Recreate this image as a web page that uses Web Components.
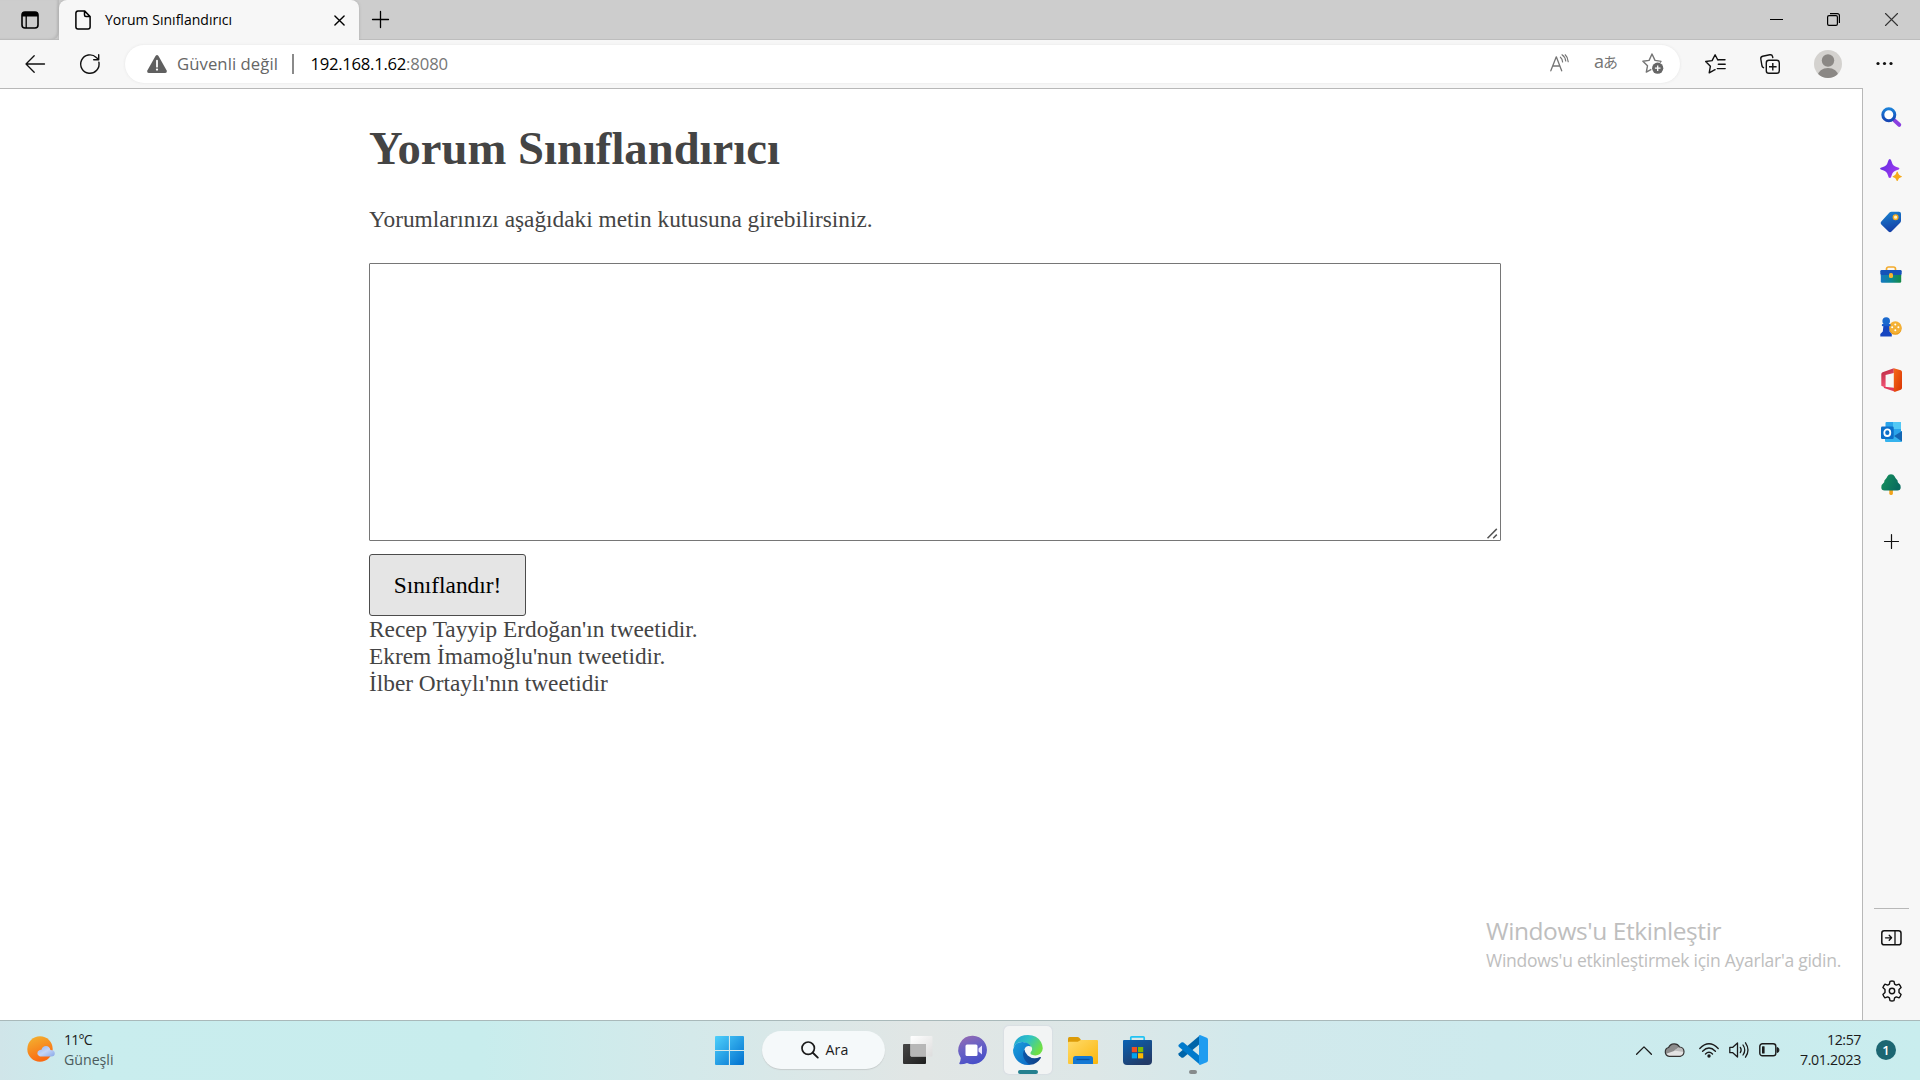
<!DOCTYPE html>
<html lang="tr">
<head>
<meta charset="utf-8">
<title>Yorum Sınıflandırıcı</title>
<style>
html,body{margin:0;height:100%;overflow:hidden;background:#fff}
body{font-family:"Open Sans","Noto Sans",sans-serif;color:#1b1b1b}
</style>
</head>
<body>
<desktop-screen></desktop-screen>
<script>
const stroke = (d, w = 1.4, c = 'currentColor') => `<path d="${d}" fill="none" stroke="${c}" stroke-width="${w}" stroke-linecap="round" stroke-linejoin="round"/>`;
const ICONS = {
  tabs: [18, 18, `<rect x="1" y="1" width="16" height="16" rx="3" fill="none" stroke="currentColor" stroke-width="1.6"/><path d="M1 5.5V4a3 3 0 0 1 3-3h10a3 3 0 0 1 3 3v1.5z" fill="currentColor"/><path d="M5.2 5v12" stroke="currentColor" stroke-width="1.3"/>`],
  file: [16, 20, stroke('M9.5.9H3A2.2 2.2 0 0 0 .9 3v14A2.2 2.2 0 0 0 3 19.1h10a2.2 2.2 0 0 0 2.1-2.1V6.5zM9.5.9V5A1.5 1.5 0 0 0 11 6.5h4.1', 1.5)],
  close: [11, 11, stroke('M.9.9l9.2 9.2M10.1.9L.9 10.1', 1.4)],
  plus: [17, 17, stroke('M8.5.5v16M.5 8.5h16', 1.3)],
  plusBig: [15, 15, stroke('M7.5.5v14M.5 7.5h14', 1.2)],
  min: [13, 13, `<path d="M0 6.5h13" stroke="#000" stroke-width="1"/>`],
  restore: [13, 13, `<rect x=".6" y="2.6" width="9.8" height="9.8" rx="1.4" fill="none" stroke="#000" stroke-width="1.2"/><path d="M3 .6h7.4a2 2 0 0 1 2 2v7.4" fill="none" stroke="#000" stroke-width="1.2"/>`],
  winclose: [13, 13, stroke('M.5.5l12 12M12.5.5l-12 12', 1.1, '#333')],
  back: [20, 18, stroke('M19.5 9H1M9.2.8L1 9l8.2 8.2', 1.3)],
  refresh: [20, 20, stroke('M18.9 8.2A9.2 9.2 0 1 1 16.3 3.5l2.3 2.1M18.7.8v4.9h-5', 1.4)],
  warn: [20, 18, `<path d="M8.5 1Q10-1 11.5 1l8 14.2q1 2.5-1.4 2.8H1.9q-2.4-.3-1.4-2.8z" fill="#5f5f5f"/><path d="M10 5.7v6" stroke="#fff" stroke-width="1.8" stroke-linecap="round"/><circle cx="10" cy="14.6" r="1.15" fill="#fff"/>`],
  read: [19, 18, `<g color="#757575">${stroke('M.8 16.8L6.3 2.8l5.4 14M2.8 12h7', 1.3)}${stroke('M10.4 3.2q2 1.7 2.2 4.8M12 .8q3.4 2.3 3.7 6.2M15.2.8q2.6 2.3 3 6.9', 1.2)}</g>`],
  starPlus: [22, 21, `<path d="M17.8 8.1L13 7.4 10 1 7.1 7.4.9 8.3l4.6 4.5-1.2 6.3 5-2.8M17.8 8.1l1.2.3-1 1.2" fill="none" stroke="#757575" stroke-width="1.4" stroke-linejoin="round"/><circle cx="15.7" cy="15.2" r="5.6" fill="#666"/><path d="M15.7 12.4V18M12.9 15.2h5.6" stroke="#fff" stroke-width="1.3"/>`],
  favs: [21, 20, stroke('M20 5.8h-6.2L12.8 6l-2.7-5.2-3 5.8-6.4.9 4.7 4.7-1.2 6.6 4.9-2.6 1-.5M13.3 10.2h6.9M12.3 14.6h7.9', 1.4)],
  collect: [20, 20, stroke('M3.5 13.7A2.5 2.5 0 0 1 2 12L.8 5A2.4 2.4 0 0 1 2.6 2.3L9.8.8a2.4 2.4 0 0 1 2.8 1.8l.2 1', 1.4) + `<rect x="6.3" y="6.3" width="13" height="13" rx="2.6" fill="none" stroke="currentColor" stroke-width="1.4"/><path d="M12.8 9v7.6M9 12.8h7.6" stroke="currentColor" stroke-width="1.4"/>`],
  avatar: [28, 28, `<defs><clipPath id="c"><circle cx="14" cy="14" r="14"/></clipPath></defs><g clip-path="url(#c)"><rect width="28" height="28" fill="#d4d2cf"/><circle cx="14" cy="10.5" r="6.2" fill="#8b8885"/><ellipse cx="14" cy="26" rx="10.2" ry="8" fill="#8b8885"/></g>`],
  dots: [17, 5, `<circle cx="2" cy="2.5" r="1.6"/><circle cx="8.5" cy="2.5" r="1.6"/><circle cx="15" cy="2.5" r="1.6"/>`],
  sSearch: [20, 20, `<path d="M13.4 13.4l4.8 4.4" stroke="#8a3fe0" stroke-width="4" stroke-linecap="round"/><circle cx="7.8" cy="7.8" r="6" fill="#fff" stroke="url(#a)" stroke-width="3"/><defs><linearGradient id="a" x2="0" y2="1"><stop stop-color="#1b7fd8"/><stop offset="1" stop-color="#1646b4"/></linearGradient></defs>`],
  sSpark: [22, 22, `<defs><linearGradient id="a" x2="1" y2=".6"><stop stop-color="#5a2be0"/><stop offset="1" stop-color="#a13af0"/></linearGradient></defs><path d="M9.8 0q1.3 0 1.8 2.5 1.2 4.7 5 5.4 2.9.7 2.9 1.7t-2.9 1.7q-3.8.8-5 5.2-.5 2.6-1.8 2.6T8 16.500q-1.200-4.400-5-5.200Q0 10.600 0 9.600t3-1.700q3.800-.7 5-5.400Q8.500 0 9.800 0z" fill="url(#a)"/><path d="M17.200 12.500q.7 0 1 1.800.6 2 2.300 2.400 1.500.3 1.500.9t-1.500.9q-1.700.4-2.300 2.300-.3 1.200-1 1.200t-1-1.200q-.6-1.900-2.300-2.300-1.400-.3-1.400-.9t1.400-.9q1.700-.4 2.300-2.400.3-1.800 1-1.800z" fill="#f5aa1c"/>`],
  sTag: [22, 22, `<defs><linearGradient id="a" y2="1" x2=".3"><stop stop-color="#1a86d0"/><stop offset="1" stop-color="#1440a8"/></linearGradient></defs><path d="M9.500 1.500Q10.200.8 11.500.8H19q2 0 2 2v7q0 1.200-.8 2l-8.700 8.800q-1.500 1.300-3 0L1.300 13.500q-1.500-1.500 0-3z" fill="url(#a)"/><circle cx="15.600" cy="6.200" r="2.300" fill="#fff1c0" stroke="#f4aa1e" stroke-width="1.400"/>`],
  sBox: [22, 17, `<defs><linearGradient id="a" x2="1"><stop stop-color="#1678c4"/><stop offset=".5" stop-color="#0c8795"/><stop offset="1" stop-color="#158a45"/></linearGradient></defs><path d="M6.500 4.500V3a2 2 0 0 1 2-2h5a2 2 0 0 1 2 2v1.500" fill="none" stroke="#f3ab2c" stroke-width="1.700"/><rect x=".8" y="8" width="20.400" height="8.700" rx="1.300" fill="url(#a)"/><rect x=".3" y="4" width="21.400" height="5" rx="1.200" fill="#1552b8"/><rect x="9" y="7" width="4" height="5" rx="1.600" fill="#f7b52e"/>`],
  sGames: [22, 20, `<circle cx="15.300" cy="11.500" r="6.300" fill="#e99710"/><circle cx="15.300" cy="10.500" r="6.200" fill="#f4b135"/><g fill="#fff"><circle cx="15.300" cy="7.400" r="1"/><circle cx="12.200" cy="10.300" r="1"/><circle cx="18.400" cy="10.300" r="1"/><circle cx="15.300" cy="13.300" r="1"/></g><path d="M3.500 8h5.500l.5 6.500 2.300 2.500v2.500H.3V17l2.500-2.500z" fill="#1646c0"/><rect x="1.800" y="7" width="8.800" height="2.300" rx="1" fill="#1a5ccc"/><circle cx="6.200" cy="4" r="3.800" fill="#1b69ce"/>`],
  sOffice: [21, 24, `<defs><linearGradient id="a" y2="1" x2=".4"><stop stop-color="#b5263e"/><stop offset="1" stop-color="#f7577a"/></linearGradient><linearGradient id="b" y2="1"><stop stop-color="#f66a1a"/><stop offset="1" stop-color="#d93403"/></linearGradient></defs><path d="M12.800.2L1.600 4.300Q.3 4.900.3 6.300v11.400l4.300 2V7l8.200-2z" fill="url(#a)"/><path d="M3.500 18.700l9.300 1 1.500 4.100L3 20q-1-.5.500-1.300z" fill="#e2395b"/><path d="M12.800.2l7 2q1.200.5 1.200 1.800v16q0 1.300-1.200 1.700l-5.600 2.100-1.400-.2z" fill="url(#b)"/>`],
  sOutlook: [21, 20, `<rect x="4.500" y="0" width="15.500" height="15" rx="1" fill="#2aa4ea"/><path d="M12 0h8v7h-8z" fill="#52c8f5"/><path d="M4 9l8.500 5L21 9v10q0 1-1 1H5q-1 0-1-1z" fill="#35b3ee"/><path d="M13 14l8-5v10.500z" fill="#1466b3"/><rect x="0" y="4.500" width="12.700" height="12.500" rx="1.200" fill="#0c6fc9"/><ellipse cx="6.300" cy="10.700" rx="3" ry="3.300" fill="none" stroke="#fff" stroke-width="1.800"/>`],
  sTree: [20, 21, `<defs><linearGradient id="a" x2="1" y2=".4"><stop stop-color="#17945c"/><stop offset="1" stop-color="#086c5e"/></linearGradient></defs><rect x="8.300" y="14" width="3.600" height="7" rx="1.400" fill="#f2a31b"/><path d="M10 .2q2.600 0 3.700 2.400.8 1.600 1.600 2.500 1.800 1.200 1.500 3.200 2.900 2.200 2.900 5 0 3.200-3.300 3.200H3.600q-3.300 0-3.300-3.200 0-2.800 2.900-5-.3-2 1.500-3.200.8-.9 1.600-2.500Q7.400.2 10 .2z" fill="url(#a)"/>`],
  sPanel: [21, 16, `<rect x=".8" y=".8" width="19.200" height="14" rx="2.400" fill="none" stroke="currentColor" stroke-width="1.500"/><path d="M14 1v14" stroke="currentColor" stroke-width="1.300"/>` + stroke('M4.500 7.800h6M8.200 5.300l2.400 2.500-2.400 2.500', 1.3)],
  gear: [22, 22, `<path d="M9 1.400Q11 .7 13 1.400l.6 2.700 1.700 1 2.800-.9q1.400 1.500 2 3.400L18 9.600v2.800l2.100 2q-.6 2-2 3.400l-2.800-.9-1.700 1-.6 2.700q-2 .7-4 0l-.6-2.700-1.700-1-2.800.9q-1.400-1.500-2-3.400l2.100-2V9.600l-2.100-2q.6-2 2-3.400l2.800.9 1.700-1z" fill="none" stroke="currentColor" stroke-width="1.400" stroke-linejoin="round"/><circle cx="11" cy="11" r="2.700" fill="none" stroke="currentColor" stroke-width="1.400"/>`],
  weather: [28, 26, `<defs><linearGradient id="a" y2="1" x2=".4"><stop stop-color="#f2b632"/><stop offset="1" stop-color="#fb6a12"/></linearGradient><linearGradient id="b" y2="1"><stop stop-color="#8fb2f2"/><stop offset=".5" stop-color="#c4d5f7"/><stop offset="1" stop-color="#88a7e8"/></linearGradient></defs><circle cx="13" cy="13" r="12.700" fill="url(#a)"/><path d="M13 20.500a3.400 3.400 0 0 1-.2-6.600q1.200-.3 1.700-.2Q15.500 10 19 10t4.400 3.900q4.400 0 4.400 3.400 0 3.200-3.600 3.200z" fill="url(#b)"/>`],
  start: [29, 29, `<defs><linearGradient id="a" gradientUnits="userSpaceOnUse" x2="29" y2="29"><stop stop-color="#4fd0fb"/><stop offset="1" stop-color="#0070cf"/></linearGradient></defs><path d="M1 0h12.900v13.900H0V1q0-1 1-1zM15 0h13q1 0 1 1v12.900H15zM0 15h13.900v14H1q-1 0-1-1zM15 15h14v13q0 1-1 1H15z" fill="url(#a)"/>`],
  find: [18, 18, `<circle cx="7.200" cy="7.200" r="6.200" fill="none" stroke="#1b1b1b" stroke-width="1.700"/><path d="M11.800 11.800l5 4.800" stroke="#1b1b1b" stroke-width="1.900" stroke-linecap="round"/>`],
  task: [30, 28, `<defs><linearGradient id="a" y2="1" x2="1"><stop stop-color="#474747"/><stop offset="1" stop-color="#1f1f1f"/></linearGradient><linearGradient id="b" y2="1" x2="1"><stop stop-color="#fff"/><stop offset="1" stop-color="#ddd"/></linearGradient></defs><rect y="8" width="23" height="20" rx="1" fill="url(#a)"/><rect x="7.500" y="0" width="22" height="20.500" rx="1" fill="url(#b)"/><path d="M7.500 8H23v12.500H8.500q-1 0-1-1z" fill="#b7b7b7"/>`],
  chat: [30, 30, `<defs><linearGradient id="a" y2="1" x2=".4"><stop stop-color="#9a6bb0"/><stop offset=".5" stop-color="#6a62c4"/><stop offset="1" stop-color="#4a50c8"/></linearGradient></defs><path d="M15 .8A14.200 14.200 0 1 1 9 28Q6 29.300 2 29.200q-1.200-.2-.6-1.200Q2.600 26 2.800 23A14.200 14.200 0 0 1 15 .8z" fill="url(#a)"/><rect x="7.500" y="9.500" width="12" height="11.500" rx="1.500" fill="#fff"/><path d="M20.500 13.500L24 10.500v9l-3.500-3z" fill="#e8e4ff"/>`],
  edge: [30, 30, `<defs><linearGradient id="a" x2="1" y2=".5"><stop stop-color="#1f9fd6"/><stop offset=".5" stop-color="#2fc3c4"/><stop offset="1" stop-color="#6fdf45"/></linearGradient><linearGradient id="b" y2="1"><stop stop-color="#19a0dc"/><stop offset="1" stop-color="#0d66c4"/></linearGradient><linearGradient id="c" x2="1"><stop stop-color="#0c56a8"/><stop offset="1" stop-color="#123f84"/></linearGradient></defs><path d="M.5 12Q2.500 0 15 0q9 0 13 7 4 8-1 12-3.500 2.300-8 .8-2.500-1-1-3 2.200-2.800.2-5.300-2.200-2.700-6.500-4Q5 5.500.5 12z" fill="url(#a)"/><path d="M0 15Q1.500 6.800 9.500 7q6 .3 8.700 4.500-5-1.700-6.700 2.700-1.300 5 2 10 2 3.500 4 5.600Q9 31 4 25.200 0 20.500 0 15z" fill="url(#b)"/><path d="M11.500 14.500q-2.600 3.700-.6 8.700 2 4.600 6.600 6.600 6.500-.8 10.200-6.600.8-1.700-.8-1.200-7 3-12.200-1.600-3.200-3-3.200-5.900z" fill="url(#c)"/>`],
  folder: [30, 27, `<defs><linearGradient id="a" y2="1" x2="1"><stop stop-color="#ffdb6b"/><stop offset="1" stop-color="#fbb60c"/></linearGradient></defs><path d="M0 1.500Q0 0 1.500 0h8q1 0 2 1l2 2.700V8H0z" fill="#dc9b08"/><path d="M0 5.800q0-1 1-1h8.800l3-1.800H29q1 0 1 1v22q0 1-1 1H1q-1 0-1-1z" fill="url(#a)"/><path d="M5 27v-5.500q0-2.500 2.500-2.500h15q2.500 0 2.500 2.500V27z" fill="#1478d4"/><path d="M8.500 22.500h13" stroke="#0a529f" stroke-width="1.300"/>`],
  store: [29, 29, `<defs><linearGradient id="a" y2="1" x2=".6"><stop stop-color="#0a63b4"/><stop offset="1" stop-color="#223b68"/></linearGradient></defs><path d="M7.800 5.500V1.700q0-.9.900-.9h11.600q.9 0 .9.900v3.800" fill="none" stroke="#22c3f3" stroke-width="1.700"/><path d="M1 4h27q1 0 1 1v20q0 4-4 4H4q-4 0-4-4V5q0-1 1-1z" fill="url(#a)"/><path d="M8.800 11h5.200v5.200H8.800z" fill="#f25022"/><path d="M15 11h5.200v5.200H15z" fill="#7fba00"/><path d="M8.800 17.200h5.200v5.200H8.800z" fill="#00a4ef"/><path d="M15 17.200h5.200v5.200H15z" fill="#ffb900"/>`],
  code: [30, 30, `<path d="M22 .2v8.600L5.500 22.400q-1.200.8-2.200 0L.8 20.200q-1-1 0-2z" fill="#0065a9"/><path d="M22 29.800v-8.600L5.500 7.600q-1.200-.8-2.200 0L.8 9.800q-1 1 0 2z" fill="#007acc"/><path d="M22 0l6.800 2.800Q30 3.400 30 4.700v20.600q0 1.300-1.200 1.900L22 30q-1.200-.3-1-2V2q-.2-1.700 1-2z" fill="#1f9cf0"/>`],
  chev: [16, 9, stroke('M.6 8.300L8 .9l7.400 7.400', 1.3)],
  cloud: [21, 14, `<path d="M5.200 13.300A4.500 4.500 0 0 1 4.600 4.500 6.200 6.200 0 0 1 15.600 4a4.700 4.700 0 0 1 .6 9.300z" fill="#e3e3e3"/><path d="M4.600 4.500A6.200 6.200 0 0 1 15.600 4L10 8 1.500 11Q0 6 4.600 4.500z" fill="#8c8c8c"/><path d="M10 7.500l5.600-3.500q4 .5 4.200 5z" fill="#bdbdbd"/><path d="M5.200 13.300A4.500 4.500 0 0 1 4.600 4.500 6.200 6.200 0 0 1 15.600 4a4.700 4.700 0 0 1 .6 9.300z" fill="none" stroke="#333" stroke-width="1.200"/>`],
  wifi: [20, 15, stroke('M.8 5.400Q10-3.800 19.200 5.400M3.600 8.200q6.400-6.200 12.800 0M6.500 11Q10 7.700 13.500 11', 1.4) + `<circle cx="10" cy="13" r="1.700"/>`],
  sound: [20, 16, stroke('M.8 5.300h3L8.500 1v14l-4.700-4.300h-3zM11.300 5.400q1.700 2.600 0 5.200M14 3q3.500 5 0 10M16.500.8q5 7.200 0 14.400', 1.3)],
  battery: [20, 14, `<rect x=".8" y=".8" width="16" height="12" rx="2.600" fill="none" stroke="currentColor" stroke-width="1.400"/><rect x="3" y="3.200" width="2.600" height="7.300" rx=".6"/><path d="M18 4.500q2 0 2 2.500t-2 2.500z" stroke="currentColor" stroke-width=".8"/>`],
  grip: [11, 11, `<path d="M.5 10.200L9.800 .9M6.200 10.200l3.600-3.600" stroke="#555" stroke-width="1.500"/>`]
};
class Base extends HTMLElement {
  constructor() {
    super();
    this.attachShadow({ mode: 'open' }).innerHTML = `<style>*{box-sizing:border-box}${this.constructor.css || ''}</style>${this.constructor.html || ''}`;
  }
}
/* Inline icon: <ui-icon name="…"> sized from its own artwork. */
customElements.define('ui-icon', class extends HTMLElement {
  connectedCallback() {
    if (this.shadowRoot) return;
    const [w, h, body] = ICONS[this.getAttribute('name')];
    this.attachShadow({ mode: 'open' }).innerHTML = `<style>:host{display:block;flex:none;width:${w}px;height:${h}px}svg{display:block;overflow:visible}</style><svg width="${w}" height="${h}" viewBox="0 0 ${w} ${h}" fill="currentColor">${body}</svg>`;
  }
});
/* One-line label whose tracking is adjusted to fill the width in its w attribute. */
customElements.define('ui-label', class extends Base {
  static css = ':host{display:block;flex:none;white-space:nowrap}span{display:inline-block}';
  static html = '<span><slot></slot></span>';
  connectedCallback() {
    const want = +this.getAttribute('w'), s = this.shadowRoot.querySelector('span');
    this.style.width = want + 'px';
    s.style.letterSpacing = (want - s.getBoundingClientRect().width) / this.textContent.length + 'px';
  }
});
customElements.define('tab-strip', class extends Base {
  static css = `:host{display:flex;height:40px;background:#cdcdcd;color:#000;border-bottom:1px solid #bdbdbd}
  .ws{width:59px;height:40px;border-radius:0 0 8px 0;display:flex;padding:11px 0 0 21px;box-shadow:inset -2px -1px 2px #bbb}
  .tab{width:300px;height:40px;background:#f7f7f7;border-radius:8px 8px 0 0;display:flex;align-items:center;padding-left:16px;box-shadow:0 0 3px #aaa}
  ui-label{font-size:14px;line-height:20px;margin:-1px 0 0 14px}
  .x{margin:1px 0 0 102px}.add{margin:11px 0 0 13px}
  .win{margin-left:auto;display:flex;gap:44px;padding:13px 22px 0 0}.win :last-child{margin-left:1px}`;
  static html = `<div class="ws"><ui-icon name="tabs"></ui-icon></div>
  <div class="tab"><ui-icon name="file"></ui-icon><ui-label w="127">Yorum Sınıflandırıcı</ui-label><ui-icon class="x" name="close"></ui-icon></div>
  <ui-icon class="add" name="plus"></ui-icon>
  <div class="win"><ui-icon name="min"></ui-icon><ui-icon name="restore"></ui-icon><ui-icon name="winclose"></ui-icon></div>`;
});
customElements.define('address-bar', class extends Base {
  static css = `:host{display:flex;align-items:center;width:1555px;height:38px;border-radius:19px;background:#fff;box-shadow:0 0 3px #e4e4e4;padding-left:22px;font-size:16.700px;line-height:24px;color:#666}
  .sec{margin-left:10px}.bar{width:1.500px;height:20px;background:#8a8a8a;margin:0 17px 0 14px}
  .ip{color:#000}.port{color:#767676}.read{margin-left:auto;margin-top:-2px}
  .tr{font:18px/22px "Open Sans","Noto Sans CJK JP",sans-serif;color:#757575;margin:-6px 24px 0 25px;display:flex;align-items:baseline}.tr small{font:15px "Noto Sans CJK JP",sans-serif;margin-left:-1px}
  .st{margin-right:16px}`;
  static html = `<ui-icon name="warn"></ui-icon><ui-label class="sec" w="101">Güvenli değil</ui-label><div class="bar"></div><ui-label class="ip" w="95.500">192.168.1.62</ui-label><ui-label class="port" w="42">:8080</ui-label>
  <ui-icon class="read" name="read"></ui-icon><div class="tr">a<small>あ</small></div><ui-icon class="st" name="starPlus"></ui-icon>`;
});
customElements.define('tool-bar', class extends Base {
  static css = `:host{display:flex;align-items:center;height:48px;background:#f7f7f7;padding:0 0 1px 25px;color:#111}
  .r{margin:1px 25px 0 35px}.f{margin-left:25px}.c{margin-left:34px}.a{margin-left:34px}.d{margin-left:34px}`;
  static html = `<ui-icon name="back"></ui-icon><ui-icon class="r" name="refresh"></ui-icon><address-bar></address-bar>
  <ui-icon class="f" name="favs"></ui-icon><ui-icon class="c" name="collect"></ui-icon><ui-icon class="a" name="avatar"></ui-icon><ui-icon class="d" name="dots"></ui-icon>`;
});
customElements.define('comment-form', class extends Base {
  static css = `:host{display:block;width:1132px;margin-left:369px;font:23.333px/27px "Liberation Serif",serif;color:#444}
  h1{font-size:46.667px;line-height:54px;margin:32px 0 0}p{margin:31px 0 29.500px}
  .box{position:relative;height:278px}textarea{display:block;width:100%;height:100%;resize:none;border:1px solid #767676;border-radius:1px;background:#fff}
  ui-icon{position:absolute;right:3px;bottom:2px}
  button{display:block;width:157px;height:62px;margin-top:13px;font:inherit;color:#000;background:#e5e5e5;border:1px solid #4c4c4c;border-radius:3px;padding:2px 0 0}`;
  static html = `<h1>Yorum Sınıflandırıcı</h1><p>Yorumlarınızı aşağıdaki metin kutusuna girebilirsiniz.</p>
  <div class="box"><textarea></textarea><ui-icon name="grip"></ui-icon></div><button>Sınıflandır!</button><slot></slot>`;
});
customElements.define('activation-note', class extends Base {
  static css = `:host{position:absolute;left:1486px;top:826px;color:#bebebe}
  .a{font-size:24.500px;line-height:34px}.b{font-size:17.500px;line-height:25px}`;
  static html = `<ui-label class="a" w="235">Windows'u Etkinleştir</ui-label><ui-label class="b" w="355">Windows'u etkinleştirmek için Ayarlar'a gidin.</ui-label>`;
});
customElements.define('side-bar', class extends Base {
  static css = `:host{display:flex;flex-direction:column;align-items:center;width:58px;background:#f7f7f7;border-left:1px solid #b8b8b8;color:#111;padding-bottom:3px}
  .i{height:52.500px;display:flex;align-items:center;justify-content:center}.list{padding:3px 1px 0 0}.add{height:60px}
  .foot{margin-top:auto;border-top:1px solid #b8b8b8;width:35px;padding-top:3px}`;
  static html = `<div class="list">${['sSearch', 'sSpark', 'sTag', 'sBox', 'sGames', 'sOffice', 'sOutlook', 'sTree'].map(n => `<div class="i"><ui-icon name="${n}"></ui-icon></div>`).join('')}<div class="i add"><ui-icon name="plusBig"></ui-icon></div></div>
  <div class="foot"><div class="i"><ui-icon name="sPanel"></ui-icon></div><div class="i"><ui-icon name="gear"></ui-icon></div></div>`;
});
customElements.define('task-bar', class extends Base {
  static css = `:host{display:flex;align-items:center;height:60px;box-sizing:border-box;padding-bottom:1px;border-top:1px solid #a9b9ba;background:linear-gradient(90deg,#d0e5e9 0,#c9edee 5%,#c8eded 25%,#d4e9ea 36%,#e1e6e5 48%,#dde7e7 57%,#d2e9ec 65%,#cdeaed 78%,#c9edee 100%);font-size:14.200px;line-height:20px;color:#1b1b1b}
  .w{margin:-2px 9px 0 27px}.g{color:#4c5b5d}
  .apps{display:flex;align-items:center;margin-left:601px}
  .s{display:flex;align-items:center;width:123px;height:38px;border-radius:19px;background:#f5f9fa;box-shadow:0 1px 1px #c6cccc;margin:0 18px;padding-left:39px}
  .s ui-label{margin-left:7px}
  .app{width:48px;height:48px;display:flex;align-items:center;justify-content:center;margin-right:7px;border-radius:5px;position:relative}
  .on{background:#f2f4f4;box-shadow:0 0 2px #ccd}
  .on:after,.run:after{content:"";position:absolute;bottom:0;width:20px;height:4px;border-radius:2px;background:#24808f}.run:after{width:8px;background:#868b8c}
  .tray{display:flex;align-items:center;margin-left:auto;padding-right:24px}
  .t{display:flex;flex-direction:column;align-items:flex-end;margin:-1px 15px 0 21px}
  .n{width:20px;height:20px;border-radius:50%;background:#1c6672;color:#fff;font-size:13px;text-align:center;font-weight:600}`;
  static html = `<ui-icon class="w" name="weather"></ui-icon><div style="margin-top:-1px"><ui-label w="28">11°C</ui-label><ui-label class="g" w="49.500">Güneşli</ui-label></div>
  <div class="apps"><ui-icon name="start"></ui-icon><div class="s"><ui-icon name="find"></ui-icon><ui-label w="23">Ara</ui-label></div>
  <div class="app" style="margin-left:-9px"><ui-icon name="task"></ui-icon></div><div class="app"><ui-icon name="chat"></ui-icon></div><div class="app on"><ui-icon name="edge"></ui-icon></div><div class="app"><ui-icon name="folder"></ui-icon></div><div class="app"><ui-icon name="store"></ui-icon></div><div class="app run"><ui-icon name="code"></ui-icon></div></div>
  <div class="tray"><ui-icon name="chev"></ui-icon><ui-icon name="cloud" style="margin-left:12px"></ui-icon><ui-icon name="wifi" style="margin-left:14px"></ui-icon><ui-icon name="sound" style="margin-left:10px"></ui-icon><ui-icon name="battery" style="margin-left:10px"></ui-icon>
  <div class="t"><ui-label w="34">12:57</ui-label><ui-label w="61">7.01.2023</ui-label></div><div class="n">1</div></div>`;
});
customElements.define('desktop-screen', class extends Base {
  static css = `:host{display:flex;flex-direction:column;width:1920px;height:1080px;overflow:hidden}
  .mid{flex:1;display:flex;min-height:0;position:relative}main{flex:1;background:#fff;border-top:1px solid #b8b8b8;display:flow-root}`;
  static html = `<tab-strip></tab-strip><tool-bar></tool-bar><div class="mid"><main><comment-form><div>Recep Tayyip Erdoğan'ın tweetidir.</div><div>Ekrem İmamoğlu'nun tweetidir.</div><div>İlber Ortaylı'nın tweetidir</div></comment-form></main><side-bar></side-bar><activation-note></activation-note></div><task-bar></task-bar>`;
});
</script>
</body>
</html>
